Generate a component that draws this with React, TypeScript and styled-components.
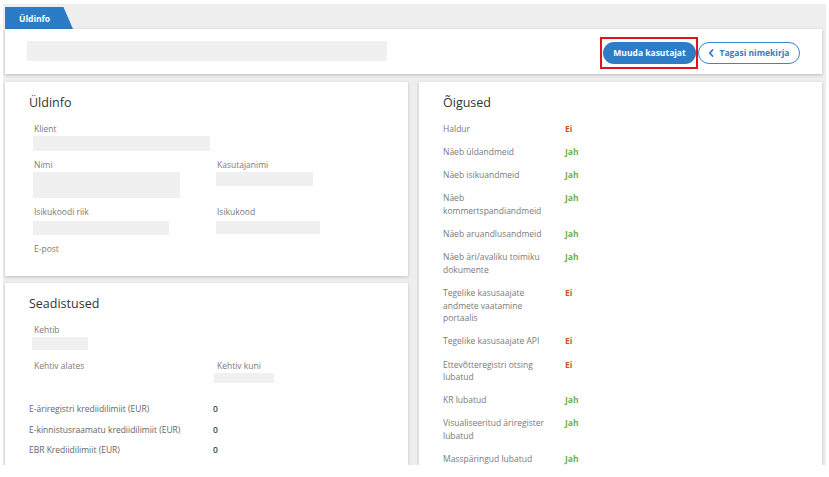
import React from "react";
import styled, { createGlobalStyle } from "styled-components";

const Global = createGlobalStyle`
  html, body { margin: 0; padding: 0; background: #ffffff; }
  body { font-family: "Open Sans", "Noto Sans", sans-serif; }
  * { box-sizing: border-box; }
`;

const Page = styled.div`
  margin: 4px 3px 0 3px;
  height: 461px;
  background: #eeeeee;
  overflow: hidden;
  padding: 0 4px 0 2px;
`;

const TabBar = styled.div`
  height: 25px;
  display: flex;
  align-items: flex-end;
`;

const Tab = styled.div`
  height: 22px;
  width: 68px;
  background: #2b7cc6;
  color: #fff;
  font-size: 8.5px;
  font-weight: 700;
  display: flex;
  align-items: center;
  padding-left: 14px;
  clip-path: polygon(0 0, 86% 0, 100% 100%, 0 100%);
`;

const HeaderCard = styled.div`
  height: 45px;
  background: #fff;
  box-shadow: 0 1px 3px rgba(0, 0, 0, 0.22);
  display: flex;
  align-items: center;
  padding: 0 22px;
  position: relative;
`;

const Placeholder = styled.div<{ $w: number; $h: number; $mt?: number; $ml?: number }>`
  width: ${(p) => p.$w}px;
  height: ${(p) => p.$h}px;
  margin-top: ${(p) => p.$mt ?? 0}px;
  margin-left: ${(p) => p.$ml ?? 0}px;
  background: #f0f0f0;
`;

const Actions = styled.div`
  margin-left: auto;
  display: flex;
  align-items: center;
  margin-top: 2px;
`;

const Highlight = styled.div`
  border: 2px solid #e0141b;
  padding: 3px 0 3px 1px;
  display: flex;
`;

const PrimaryButton = styled.button`
  height: 22px;
  width: 93px;
  border: none;
  border-radius: 11px;
  background: #2d7cc5;
  color: #fff;
  font-family: "Open Sans", sans-serif;
  font-weight: 700;
  font-size: 8.5px;
  padding: 0;
`;

const OutlineButton = styled.button`
  height: 22px;
  width: 102px;
  border: 1px solid #3a86cc;
  border-radius: 11px;
  background: #fff;
  color: #2d7cc5;
  font-family: "Open Sans", sans-serif;
  font-weight: 700;
  font-size: 8.5px;
  display: flex;
  align-items: center;
  justify-content: center;
  gap: 5px;
  padding: 0;
`;

const Columns = styled.div`
  margin-top: 8px;
  display: grid;
  grid-template-columns: 403px 403px;
  column-gap: 11px;
  align-items: start;
`;

const LeftColumn = styled.div`
  display: flex;
  flex-direction: column;
  gap: 7px;
`;

const Card = styled.div<{ $h?: number }>`
  background: #fff;
  box-shadow: 0 1px 3px rgba(0, 0, 0, 0.2);
  padding: 13px 24px 12px 24px;
  ${(p) => (p.$h ? `height: ${p.$h}px;` : "")}
`;

const CardTitle = styled.h2`
  margin: 0 0 12px 0;
  font-size: 12.5px;
  line-height: 16px;
  font-weight: 400;
  color: #333;
`;

const FieldGrid = styled.div<{ $gap: number }>`
  display: grid;
  grid-template-columns: 183px auto;
  row-gap: ${(p) => p.$gap}px;
  padding-left: 4px;
  align-items: start;
`;

const Field = styled.div<{ $span?: boolean }>`
  display: flex;
  flex-direction: column;
  ${(p) => (p.$span ? "grid-column: 1 / -1;" : "")}
`;

const Label = styled.div`
  font-size: 8.5px;
  line-height: 12px;
  color: #7a7a7a;
  padding-left: 1px;
`;

const CreditList = styled.div`
  display: grid;
  grid-template-columns: 184px auto;
  row-gap: 8.5px;
  margin-top: 20px;
`;

const CreditLabel = styled.div`
  font-size: 8.5px;
  line-height: 12px;
  color: #666;
`;

const CreditValue = styled.div`
  font-size: 8.5px;
  line-height: 12px;
  color: #444;
  font-weight: 600;
`;

const RightsGrid = styled.div`
  display: grid;
  grid-template-columns: 122px auto;
  row-gap: 10.4px;
`;

const RightLabel = styled.div`
  font-size: 8.5px;
  line-height: 12.7px;
  color: #7a7a7a;
  padding-right: 14px;
`;

const RightValue = styled.div<{ $yes: boolean }>`
  font-size: 8.5px;
  line-height: 12.7px;
  font-weight: 700;
  color: ${(p) => (p.$yes ? "#6bb24a" : "#cc5424")};
`;

const rights: [string, boolean][] = [
  ["Haldur", false],
  ["Näeb üldandmeid", true],
  ["Näeb isikuandmeid", true],
  ["Näeb kommertspandiandmeid", true],
  ["Näeb aruandlusandmeid", true],
  ["Näeb äri/avaliku toimiku dokumente", true],
  ["Tegelike kasusaajate andmete vaatamine portaalis", false],
  ["Tegelike kasusaajate API", false],
  ["Ettevõtteregistri otsing lubatud", false],
  ["KR lubatud", true],
  ["Visualiseeritud äriregister lubatud", true],
  ["Masspäringud lubatud", true],
];

const credits = [
  "E-äriregistri krediidilimiit (EUR)",
  "E-kinnistusraamatu krediidilimiit (EUR)",
  "EBR Krediidilimiit (EUR)",
];

const Chevron = () => (
  <svg width="6" height="8" viewBox="0 0 6 8" fill="none">
    <path d="M4.5 1 L1.8 4 L4.5 7" stroke="#2d7cc5" strokeWidth="1.8" strokeLinecap="round" strokeLinejoin="round" />
  </svg>
);

export default function App() {
  return (
    <>
      <Global />
      <Page>
        <TabBar>
          <Tab>Üldinfo</Tab>
        </TabBar>
        <HeaderCard>
          <Placeholder $w={360} $h={20} $mt={-2} />
          <Actions>
            <Highlight>
              <PrimaryButton>Muuda kasutajat</PrimaryButton>
            </Highlight>
            <OutlineButton>
              <Chevron />
              Tagasi nimekirja
            </OutlineButton>
          </Actions>
        </HeaderCard>
        <Columns>
          <LeftColumn>
            <Card $h={194}>
              <CardTitle>Üldinfo</CardTitle>
              <FieldGrid $gap={8}>
                <Field $span>
                  <Label>Klient</Label>
                  <Placeholder $w={177} $h={15} $mt={1} />
                </Field>
                <Field>
                  <Label>Nimi</Label>
                  <Placeholder $w={147} $h={26} $mt={1} />
                </Field>
                <Field>
                  <Label>Kasutajanimi</Label>
                  <Placeholder $w={97} $h={14} $mt={1} />
                </Field>
                <Field>
                  <Label>Isikukoodi riik</Label>
                  <Placeholder $w={136} $h={14} $mt={3} />
                </Field>
                <Field>
                  <Label>Isikukood</Label>
                  <Placeholder $w={104} $h={13} $mt={3} />
                </Field>
                <Field $span>
                  <Label>E-post</Label>
                </Field>
              </FieldGrid>
            </Card>
            <Card $h={200}>
              <CardTitle>Seadistused</CardTitle>
              <FieldGrid $gap={10}>
                <Field $span>
                  <Label>Kehtib</Label>
                  <Placeholder $w={56} $h={13} $mt={1} $ml={-1} />
                </Field>
                <Field>
                  <Label>Kehtiv alates</Label>
                </Field>
                <Field>
                  <Label>Kehtiv kuni</Label>
                  <Placeholder $w={60} $h={10} $mt={1} $ml={-2} />
                </Field>
              </FieldGrid>
              <CreditList>
                {credits.map((c) => (
                  <React.Fragment key={c}>
                    <CreditLabel>{c}</CreditLabel>
                    <CreditValue>0</CreditValue>
                  </React.Fragment>
                ))}
              </CreditList>
            </Card>
          </LeftColumn>
          <Card $h={400}>
            <CardTitle>Õigused</CardTitle>
            <RightsGrid>
              {rights.map(([l, v]) => (
                <React.Fragment key={l}>
                  <RightLabel>{l}</RightLabel>
                  <RightValue $yes={v}>{v ? "Jah" : "Ei"}</RightValue>
                </React.Fragment>
              ))}
            </RightsGrid>
          </Card>
        </Columns>
      </Page>
    </>
  );
}
